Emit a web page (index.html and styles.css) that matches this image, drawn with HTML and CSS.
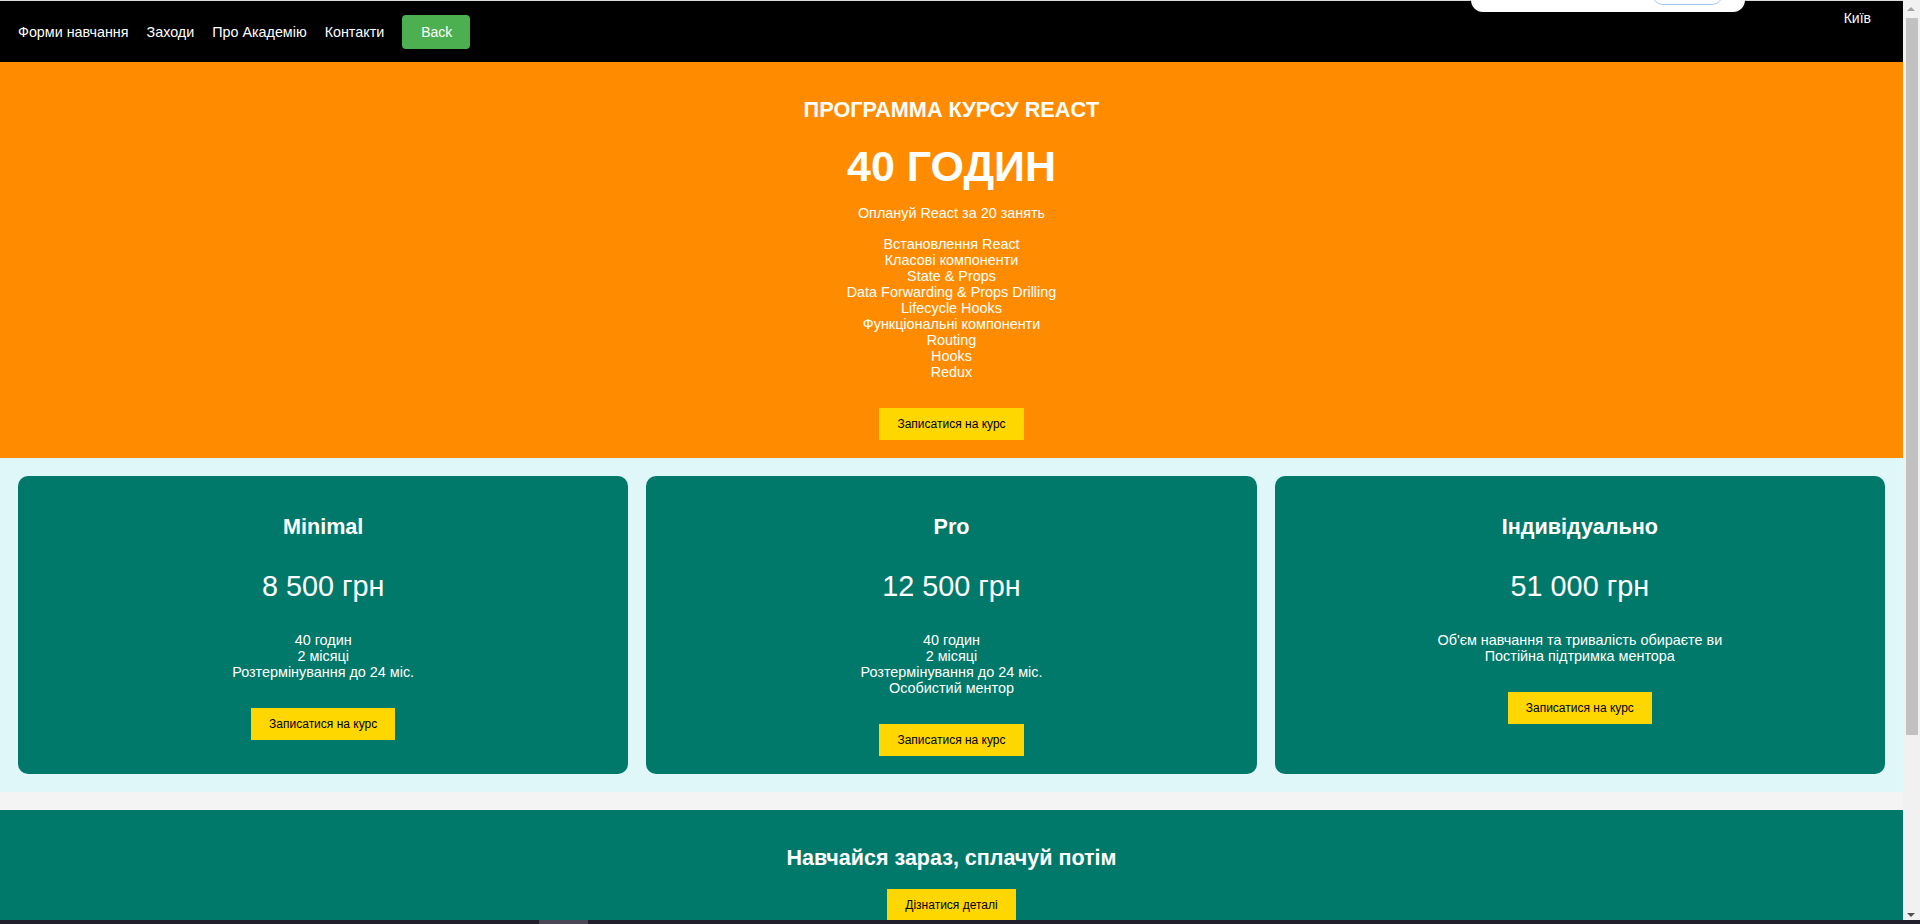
FILE: index.html
```html
<!DOCTYPE html>
<html lang="uk">
<head>
<meta charset="utf-8">
<title>Програма курсу React</title>
<link rel="stylesheet" href="styles.css">
</head>
<body>
<div class="window">
  <div class="page">
    <header class="nav">
      <nav class="nav-links">
        <a class="nav-link" href="#">Форми навчання</a>
        <a class="nav-link" href="#">Заходи</a>
        <a class="nav-link" href="#">Про Академію</a>
        <a class="nav-link" href="#">Контакти</a>
        <button class="btn-back" type="button">Back</button>
      </nav>
      <div class="city">Київ</div>
      <div class="city-popup"><span class="popup-btn"></span></div>
    </header>

    <section class="program">
      <h2 class="program-title">ПРОГРАММА КУРСУ REACT</h2>
      <p class="program-hours">40 ГОДИН</p>
      <p class="program-sub">Оплануй React за 20 занять</p>
      <ul class="topics">
        <li>Встановлення React</li>
        <li>Класові компоненти</li>
        <li>State &amp; Props</li>
        <li>Data Forwarding &amp; Props Drilling</li>
        <li>Lifecycle Hooks</li>
        <li>Функціональні компоненти</li>
        <li>Routing</li>
        <li>Hooks</li>
        <li>Redux</li>
      </ul>
      <button class="btn-yellow program-btn" type="button">Записатися на курс</button>
    </section>

    <section class="plans">
      <article class="card">
        <h3 class="card-title">Minimal</h3>
        <p class="card-price">8 500 грн</p>
        <ul class="card-features">
          <li>40 годин</li>
          <li>2 місяці</li>
          <li>Розтермінування до 24 міс.</li>
        </ul>
        <button class="btn-yellow card-btn" type="button">Записатися на курс</button>
      </article>
      <article class="card">
        <h3 class="card-title">Pro</h3>
        <p class="card-price">12 500 грн</p>
        <ul class="card-features">
          <li>40 годин</li>
          <li>2 місяці</li>
          <li>Розтермінування до 24 міс.</li>
          <li>Особистий ментор</li>
        </ul>
        <button class="btn-yellow card-btn" type="button">Записатися на курс</button>
      </article>
      <article class="card">
        <h3 class="card-title">Індивідуально</h3>
        <p class="card-price">51 000 грн</p>
        <ul class="card-features">
          <li>Об'єм навчання та тривалість обираєте ви</li>
          <li>Постійна підтримка ментора</li>
        </ul>
        <button class="btn-yellow card-btn" type="button">Записатися на курс</button>
      </article>
    </section>

    <section class="installment">
      <h2 class="installment-title">Навчайся зараз, сплачуй потім</h2>
      <button class="btn-yellow installment-btn" type="button">Дізнатися деталі</button>
    </section>
  </div>

  <div class="scrollbar">
    <span class="sb-arrow sb-up"></span>
    <div class="sb-track"><span class="sb-thumb"></span></div>
    <span class="sb-arrow sb-down"></span>
  </div>
</div>
<div class="taskbar"><span class="taskbar-item"></span></div>
</body>
</html>
```

FILE: styles.css
```css
* {
  box-sizing: border-box;
}

html,
body {
  margin: 0;
  padding: 0;
  height: 100%;
  overflow: hidden;
}

body {
  font-family: "Liberation Sans", Arial, sans-serif;
  font-size: 14.4px;
  line-height: 16px;
  background: #f4f4f4;
}

.window {
  display: flex;
  height: 100vh;
  overflow: hidden;
}

.page {
  flex: 1;
  min-width: 0;
  overflow: hidden;
  background: #f4f4f4;
}

/* ---------- nav ---------- */
.nav {
  position: relative;
  display: flex;
  justify-content: space-between;
  align-items: flex-start;
  height: 62px;
  padding: 0 32px 0 18px;
  background: #000;
  border-top: 1px solid #dcdcdc;
}

.nav-links {
  display: flex;
  align-items: center;
  gap: 18px;
  height: 61px;
}

.nav-link {
  color: #fff;
  text-decoration: none;
  font-size: 14.33px;
  line-height: 16px;
}

.btn-back {
  padding: 9px 18px 9px 19px;
  border: none;
  border-radius: 4px;
  background: #4caf50;
  color: #fff;
  font-family: inherit;
  font-size: 14px;
  line-height: 16px;
}

.city {
  padding-top: 9px;
  color: #fff;
  font-size: 14px;
  line-height: 16px;
}

.city-popup {
  position: absolute;
  top: -31px;
  left: 1471px;
  width: 274px;
  height: 42px;
  background: #fff;
  border-radius: 12px;
  box-shadow: 0 1px 3px rgba(0, 0, 0, 0.45);
}

.popup-btn {
  position: absolute;
  left: 181px;
  bottom: 7px;
  width: 71px;
  height: 22px;
  border: 1px solid #aac7ee;
  border-radius: 11px;
}

/* ---------- buttons ---------- */
.btn-yellow {
  display: inline-block;
  padding: 9px 18px;
  border: none;
  background: #ffd700;
  color: #000;
  font-family: inherit;
  font-size: 12px;
  line-height: 14px;
}

/* ---------- program ---------- */
.program {
  background: #ff8c00;
  color: #fff;
  text-align: center;
  padding: 36px 0 18px;
}

.program-title {
  margin: 0;
  font-size: 21.7px;
  line-height: 24px;
  font-weight: bold;
}

.program-hours {
  margin: 20px 0 0;
  font-size: 43px;
  line-height: 48px;
  font-weight: bold;
}

.program-sub {
  margin: 15px 0 0;
}

.topics {
  list-style: none;
  margin: 15px 0 0;
  padding: 0;
}

.program-btn {
  margin-top: 28px;
}

/* ---------- plans ---------- */
.plans {
  display: flex;
  gap: 18px;
  padding: 18px;
  background: #e0f7fa;
}

.card {
  flex: 1;
  padding: 20px 20px 18px;
  background: #00796b;
  color: #fff;
  text-align: center;
  border-radius: 10px;
}

.card-title {
  margin: 19px 0 0;
  font-size: 21.6px;
  line-height: 24px;
  font-weight: bold;
}

.card-price {
  margin: 31px 0 0;
  font-size: 28.8px;
  line-height: 32px;
}

.card-features {
  list-style: none;
  margin: 30px 0 0;
  padding: 0;
}

.card-btn {
  margin-top: 28px;
}

/* ---------- installment ---------- */
.installment {
  margin-top: 18px;
  padding: 36px 0 40px;
  background: #00796b;
  color: #fff;
  text-align: center;
}

.installment-title {
  margin: 0;
  font-size: 21.5px;
  line-height: 24px;
  font-weight: bold;
}

.installment-btn {
  margin-top: 19px;
}

/* ---------- scrollbar ---------- */
.scrollbar {
  display: flex;
  flex-direction: column;
  width: 17px;
  background: #f1f1f1;
}

.sb-arrow {
  position: relative;
  height: 17px;
  flex: none;
}

.sb-arrow::after {
  content: "";
  position: absolute;
  left: 4px;
  width: 0;
  height: 0;
  border-left: 4px solid transparent;
  border-right: 4px solid transparent;
}

.sb-up::after {
  top: 7px;
  border-bottom: 4px solid #a3a3a3;
}

.sb-down::after {
  top: 6px;
  border-top: 4px solid #505050;
}

.sb-track {
  flex: 1;
  padding: 1px 2px 0 3px;
}

.sb-thumb {
  display: block;
  width: 12px;
  height: 717px;
  background: #c1c1c1;
}

/* ---------- taskbar strip ---------- */
.taskbar {
  position: fixed;
  left: 0;
  right: 0;
  bottom: 0;
  height: 4px;
  background: #221f2d;
}

.taskbar-item {
  position: absolute;
  left: 539px;
  top: 0;
  width: 49px;
  height: 4px;
  background: #4b4756;
}
```
